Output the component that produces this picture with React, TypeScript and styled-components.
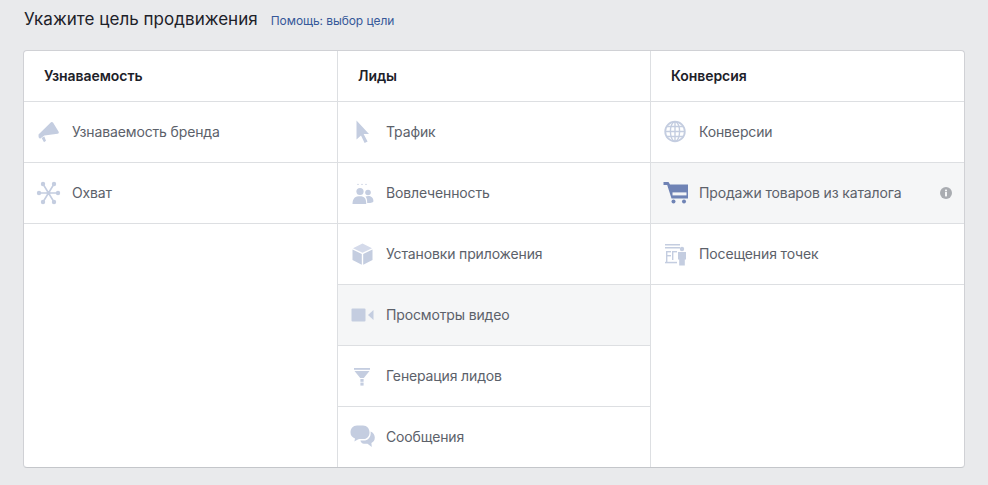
import React from 'react';
import styled, { createGlobalStyle } from 'styled-components';

const Global = createGlobalStyle`
  html, body { margin: 0; padding: 0; background: #e9eaec; }
  body { font-family: Inter, "Noto Sans", sans-serif; -webkit-font-smoothing: antialiased; }
`;
const Page = styled.div`
  width: 988px; height: 485px; box-sizing: border-box; padding: 8px 23px 0 23px; background: #e9eaec; overflow: hidden;
`;
const Heading = styled.div`
  display: flex; align-items: baseline; gap: 13px; height: 42px; padding-left: 1px; box-sizing: border-box;
`;
const Title = styled.h1`
  margin: 0; font-size: 17px; line-height: 22px; font-weight: 400; color: #1d2129; letter-spacing: 0.04px;
`;
const HelpLink = styled.a`
  font-size: 12px; color: #365899; text-decoration: none; letter-spacing: -0.08px;
`;
const Card = styled.div`
  display: grid; grid-template-columns: 314px 313px 1fr; width: 942px; height: 418px; box-sizing: border-box;
  background: #fff; border: 1px solid #d0d1d5; border-bottom-color: #c4c6ca; border-radius: 4px; overflow: hidden;
`;
const Column = styled.div<{ $last?: boolean }>`
  display: flex; flex-direction: column; box-sizing: border-box;
  border-right: ${p => (p.$last ? 'none' : '1px solid #dddfe2')};
`;
const ColumnHead = styled.div`
  height: 51px; box-sizing: border-box; display: flex; align-items: center; padding: 0 0 2px 20px;
  font-size: 14px; font-weight: 600; color: #1d2129; border-bottom: 1px solid #dddfe2; letter-spacing: -0.06px;
`;
const Row = styled.div<{ $active?: boolean; $noLine?: boolean }>`
  height: 61px; flex: none; box-sizing: border-box; display: flex; align-items: center; position: relative;
  background: ${p => (p.$active ? '#f5f6f7' : '#fff')};
  border-bottom: 1px solid ${p => (p.$noLine ? 'transparent' : '#dddfe2')};
`;
const IconSlot = styled.div`
  width: 48px; flex: none; display: flex; justify-content: center; align-items: center; padding-left: 1px; box-sizing: border-box;
`;
const Label = styled.span`
  font-size: 14px; color: #5c616a; line-height: 16px; letter-spacing: -0.14px;
`;
const Info = styled.svg`
  position: absolute; right: 12px; top: 24px;
`;

const C = '#c4cde0';
type P = { color?: string };
const Svg = ({ children }: { children: React.ReactNode }) => (
  <svg width="26" height="26" viewBox="0 0 26 26">{children}</svg>
);
const Mega = () => (
  <Svg>
    <path d="M2.5 15.5 L15 3.2 Q16.2 2.4 17 3.6 L22.8 13 Q23.2 14.6 21.6 14.8 L8.4 16.6 L4 19.8 L2.6 18.2 Z" fill={C} />
    <path d="M5.6 19 L8.4 17.6 L10 21.8 L8 23.2 Z" fill={C} />
  </Svg>
);
const Reach = () => (
  <Svg>
    <g stroke={C} strokeWidth="1.6" fill={C}>
      <path d="M12.5 13 L2 13 M12.5 13 L23 13 M12.5 13 L7 4 M12.5 13 L18 4 M12.5 13 L7 22 M12.5 13 L18 22" />
    </g>
    <g fill={C}>
      <circle cx="3" cy="13" r="2.2" /><circle cx="22" cy="13" r="2.2" />
      <circle cx="7" cy="4" r="2.2" /><circle cx="18" cy="4" r="2.2" />
      <circle cx="7" cy="22" r="2.2" /><circle cx="18" cy="22" r="2.2" />
      <circle cx="12.5" cy="13" r="2" />
    </g>
  </Svg>
);
const Cursor = () => (
  <Svg>
    <path d="M6.5 1.5 L19 15 H13.6 L17.6 22.6 L14.6 24 L11 16.6 L6.5 20.5 Z" fill={C} />
  </Svg>
);
const People = () => (
  <Svg>
    <circle cx="10" cy="11.5" r="3.6" fill={C} />
    <circle cx="18" cy="12.5" r="2.8" fill={C} />
    <path d="M2.5 24 C2.5 18 5.5 16.3 10 16.3 C14.5 16.3 16.2 18.4 16.2 24 Z" fill={C} />
    <path d="M17.2 23 C17.2 20 16.7 18 15.5 16.6 C19.3 15.2 23.4 16.6 23.4 21 C23.4 22.6 21.8 23 17.2 23 Z" fill={C} />
    <g fill={C}><circle cx="8" cy="4.4" r=".7" /><circle cx="12" cy="4.4" r=".7" /><circle cx="16" cy="4.4" r=".7" /></g>
  </Svg>
);
const Box = () => (
  <Svg>
    <path d="M12.5 2.5 L22 7.2 L12.5 11.8 L3 7.2 Z" fill="#d4daea" />
    <path d="M2.5 8.4 L11.8 13 V23.8 L2.5 19 Z" fill={C} />
    <path d="M22.5 8.4 L13.2 13 V23.8 L22.5 19 Z" fill={C} />
  </Svg>
);
const Video = () => (
  <Svg>
    <rect x="1.5" y="6.5" width="14" height="13" rx="1" fill={C} />
    <path d="M18 13 L23.5 8 V18 Z" fill={C} />
  </Svg>
);
const Funnel = () => (
  <Svg>
    <rect x="4" y="5" width="16" height="1.8" fill={C} />
    <path d="M4.5 8 H19.5 L13.8 15 H10.2 Z" fill={C} />
    <rect x="10.4" y="16" width="3.2" height="2.8" fill={C} />
    <rect x="10.4" y="19.6" width="3.2" height="3" fill={C} />
  </Svg>
);
const Chat = () => (
  <Svg>
    <path d="M7 1.5 H13 C17 1.5 19.5 4.6 19.5 8.4 C19.5 12.4 17 15 13 15 H9.5 C8 15 7 16 4.4 17.6 L5 14.4 C2.4 13.4 0.5 11.6 0.5 8.4 C0.5 4.6 3 1.5 7 1.5 Z" fill={C} />
    <path d="M20.6 7.5 C23.4 8.6 24.8 11 24.8 13.6 C24.8 16.4 23.4 18.2 21.4 19 L21.8 23 L17.5 19.8 H14 C12 19.8 10.8 18.6 10.4 16.6 H13.5 C18 16.6 21.4 13 20.6 7.5 Z" fill={C} />
  </Svg>
);
const Globe = () => (
  <Svg>
    <circle cx="12" cy="12.5" r="9.8" fill="none" stroke={C} strokeWidth="1.8" />
    <ellipse cx="12" cy="12.5" rx="4.6" ry="9.8" fill="none" stroke={C} strokeWidth="1.4" />
    <path d="M12 2.7 V22.3 M2.2 12.5 H21.8 M3.4 7.5 H20.6 M3.4 17.5 H20.6" stroke={C} strokeWidth="1.4" fill="none" />
  </Svg>
);
const Cart = ({ color = '#6f83b5' }: P) => (
  <Svg>
    <path d="M0.5 2 H5.5 L7 4.5 H25 V18.5 H8.5 L4.2 5 H0.5 Z" fill={color} />
    <rect x="9.5" y="12.4" width="14" height="3" fill="#f5f6f7" />
    <circle cx="10.5" cy="21.5" r="2" fill={color} />
    <circle cx="21" cy="21.5" r="2" fill={color} />
  </Svg>
);
const Store = () => (
  <Svg>
    <g fill={C}>
      <rect x="2" y="3" width="15" height="1.5" />
      <rect x="2" y="6" width="15" height="1.5" />
      <rect x="3" y="10" width="1.4" height="11" />
      <rect x="3" y="10" width="5" height="1.4" />
      <rect x="3" y="14" width="5" height="1.4" />
      <rect x="9" y="10" width="5" height="1.4" />
      <rect x="9" y="10" width="1.4" height="9" />
      <rect x="2" y="20.8" width="12" height="1.5" />
      <circle cx="19" cy="8" r="2.2" />
      <path d="M15 11 H23 V18.5 H21.8 V24.5 H16.2 V18.5 H15 Z" />
    </g>
  </Svg>
);

const groups = [
  { title: 'Узнаваемость', items: [
    { label: 'Узнаваемость бренда', icon: <Mega /> },
    { label: 'Охват', icon: <Reach /> },
  ] },
  { title: 'Лиды', items: [
    { label: 'Трафик', icon: <Cursor /> },
    { label: 'Вовлеченность', icon: <People /> },
    { label: 'Установки приложения', icon: <Box /> },
    { label: 'Просмотры видео', icon: <Video />, active: true },
    { label: 'Генерация лидов', icon: <Funnel /> },
    { label: 'Сообщения', icon: <Chat />, noLine: true },
  ] },
  { title: 'Конверсия', items: [
    { label: 'Конверсии', icon: <Globe /> },
    { label: 'Продажи товаров из каталога', icon: <Cart />, active: true, info: true },
    { label: 'Посещения точек', icon: <Store /> },
  ] },
];

export default function App() {
  return (
    <Page>
      <Global />
      <Heading>
        <Title>Укажите цель продвижения</Title>
        <HelpLink href="#">Помощь: выбор цели</HelpLink>
      </Heading>
      <Card>
        {groups.map((g, i) => (
          <Column key={g.title} $last={i === 2}>
            <ColumnHead>{g.title}</ColumnHead>
            {g.items.map((it: any) => (
              <Row key={it.label} $active={it.active} $noLine={it.noLine}>
                <IconSlot>{it.icon}</IconSlot>
                <Label>{it.label}</Label>
                {it.info && (
                  <Info width="12" height="12" viewBox="0 0 12 12">
                    <circle cx="6" cy="6" r="6" fill="#a9acb1" />
                    <rect x="5" y="5" width="2" height="4.4" fill="#f5f6f7" />
                    <rect x="5" y="2.6" width="2" height="1.7" fill="#f5f6f7" />
                  </Info>
                )}
              </Row>
            ))}
          </Column>
        ))}
      </Card>
    </Page>
  );
}
